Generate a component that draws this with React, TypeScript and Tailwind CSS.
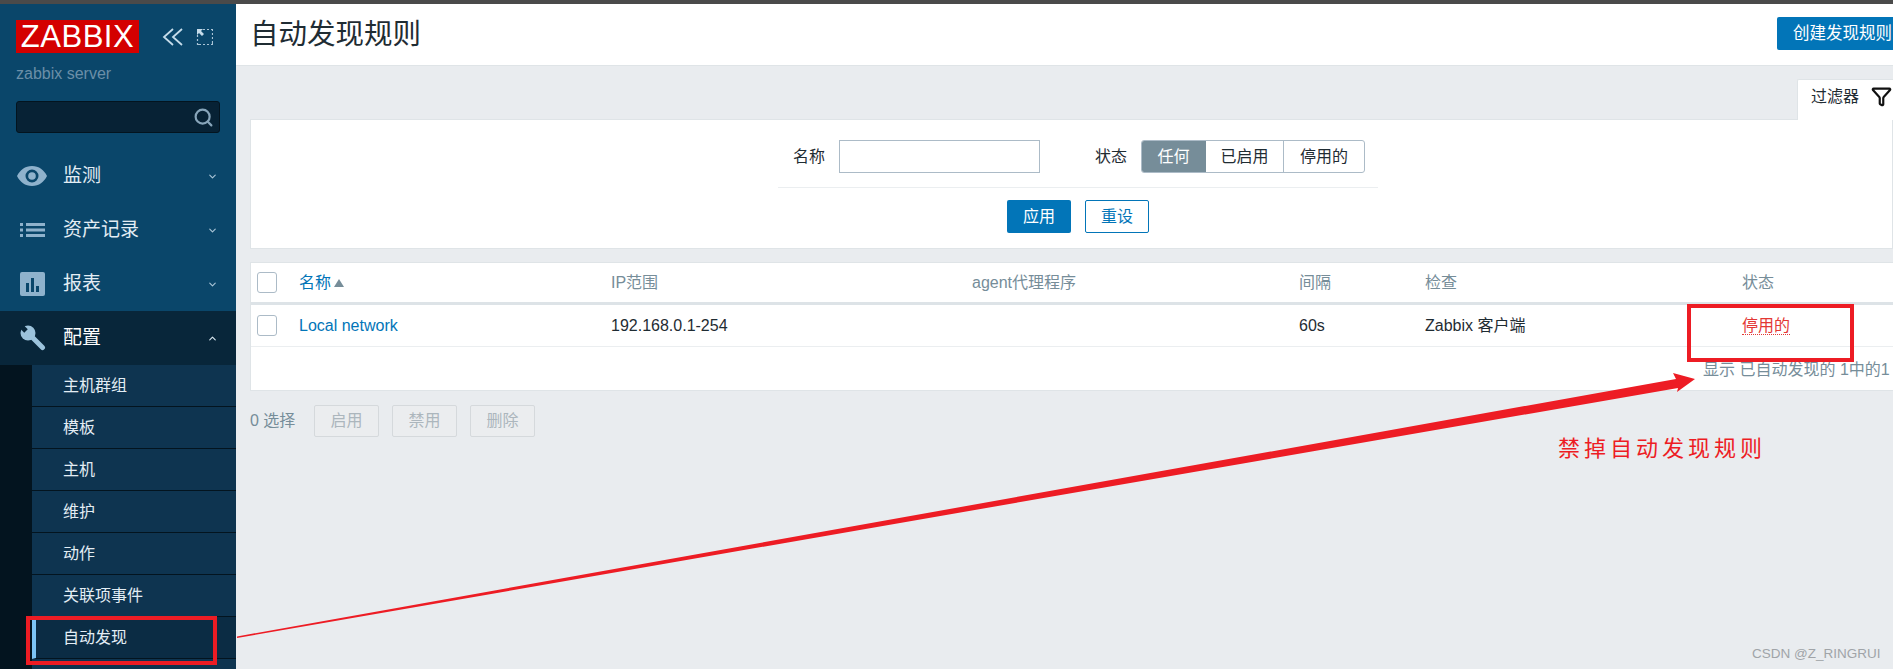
import { ChevronDown, ChevronUp, Search, Filter } from "lucide-react";

const subItems = ["主机群组", "模板", "主机", "维护", "动作", "关联项事件"];

function EyeIcon() {
  return (
    <svg width="30" height="20" viewBox="0 0 30 20" fill="#8fb2cc">
      <path d="M15 0C8 0 3 4 0 10c3 6 8 10 15 10s12-4 15-10C27 4 22 0 15 0zm0 16.500a6.500 6.500 0 1 1 0-13 6.500 6.500 0 0 1 0 13z" />
      <circle cx="15" cy="10" r="3.800" />
    </svg>
  );
}

function ListIcon() {
  return (
    <svg width="26" height="14" viewBox="0 0 26 14" fill="#8fb2cc" className="ml-[3px]">
      <rect x="0" y="0" width="3" height="3" />
      <rect x="0" y="5.500" width="3" height="3" />
      <rect x="0" y="11" width="3" height="3" />
      <rect x="6" y="0" width="19" height="3" />
      <rect x="6" y="5.500" width="19" height="3" />
      <rect x="6" y="11" width="19" height="3" />
    </svg>
  );
}

function ChartIcon() {
  return (
    <svg width="26" height="25" viewBox="0 0 26 25" className="ml-[3px]">
      <rect width="25" height="24" rx="2" fill="#8fb2cc" />
      <rect x="6" y="11" width="3" height="9" fill="#0a466a" />
      <rect x="11" y="6" width="3" height="14" fill="#0a466a" />
      <rect x="16" y="14" width="3" height="6" fill="#0a466a" />
    </svg>
  );
}

function WrenchIcon() {
  return (
    <svg width="26" height="26" viewBox="0 0 26 26" className="ml-[3px]">
      <circle cx="8" cy="8" r="7.500" fill="#9cc3dc" />
      <line x1="9" y1="9" x2="22.500" y2="22.500" stroke="#9cc3dc" strokeWidth="5" strokeLinecap="round" />
      <polygon points="7.770,4.230 4.230,7.770 -1.770,1.770 1.770,-1.770" fill="#08263a" />
    </svg>
  );
}

function CollapseIcon() {
  return (
    <svg width="21" height="18" viewBox="0 0 21 18" fill="none" stroke="#c5dcea" strokeWidth="1.800" className="ml-[23px]">
      <polyline points="11,1 2,9 11,17" />
      <polyline points="20,1 11,9 20,17" />
    </svg>
  );
}

function FullscreenIcon() {
  return (
    <svg width="17" height="17" viewBox="0 0 17 17" fill="none" stroke="#a9c4d6">
      <path d="M7 1.500h2M11 1.500h2M15 1.500h1.500V3M16.500 5v2M16.500 9v2M16.500 13v3.500H15M13 16.500h-2M9 16.500H7M5 16.500H1.500V15M1.500 13v-2M1.500 9V7" strokeWidth="1.200" />
      <path d="M1 1l6 0-2 2 3 3-2 2-3-3-2 2z" fill="#c5dcea" stroke="none" />
    </svg>
  );
}

function MenuRow({ icon, label, open }: { icon: React.ReactNode; label: string; open?: boolean }) {
  return (
    <div className={`flex items-center h-[54px] pl-[17px] pr-[18px] ${open ? "bg-[#08263a]" : ""}`}>
      <div className="w-[46px] flex items-center">{icon}</div>
      <span className={`flex-1 text-[19px] pt-[1px] ${open ? "text-white" : "text-[#e3edf4]"}`}>{label}</span>
      {open ? <ChevronUp size={11} strokeWidth={2.500} color="#d8e6ef" /> : <ChevronDown size={11} strokeWidth={2.500} color="#a9c4d6" />}
    </div>
  );
}

function Sidebar() {
  return (
    <aside className="w-[236px] shrink-0 bg-[#0a466a] flex flex-col overflow-hidden">
      <div className="flex items-center pt-[16px] pl-[16px]">
        <div className="w-[123px] h-[33px] bg-[#d40000] text-white text-[31px] leading-[33px] text-center tracking-[0.5px]">ZABBIX</div>
        <CollapseIcon />
        <div className="ml-[13px] flex"><FullscreenIcon /></div>
      </div>
      <div className="pl-[16px] mt-[11px] text-[16px] leading-[20px] text-[#6b8fa8]">zabbix server</div>
      <div className="mx-[16px] mt-[17px] h-[32px] w-[204px] shrink-0 rounded-[3px] bg-[#072235] border border-[#03141f] flex items-center justify-end pr-[5px]">
        <Search size={21} strokeWidth={2.500} color="#87a5ba" />
      </div>
      <div className="mt-[16px]">
        <MenuRow icon={<EyeIcon />} label="监测" />
        <MenuRow icon={<ListIcon />} label="资产记录" />
        <MenuRow icon={<ChartIcon />} label="报表" />
        <MenuRow icon={<WrenchIcon />} label="配置" open />
      </div>
      <div className="flex-1 pl-[32px] bg-[#03141f]">
        {subItems.map((s) => (
          <div key={s} className="h-[42px] bg-[#0e3450] border-b border-[#03141f] pl-[31px] flex items-center text-[16px] text-[#e3edf4]">{s}</div>
        ))}
        <div className="h-[42px] bg-[#0b2c44] border-b border-[#03141f] border-l-[4px] border-l-[#7cc4f5] pl-[27px] flex items-center text-[16px] text-[#e3edf4]">自动发现</div>
        <div className="h-[14px] bg-[#0e3450]" />
      </div>
    </aside>
  );
}

function Btn({ children }: { children: React.ReactNode }) {
  return (
    <div className="w-[65px] h-[32px] rounded-[2px] border border-[#d5d9dc] bg-[#ebedef] text-[#acb6bd] text-[16px] flex items-center justify-center">{children}</div>
  );
}

function Checkbox() {
  return <div className="w-[20px] h-[21px] rounded-[3px] border border-[#acbbc7] bg-white" />;
}

const columns = "grid grid-cols-[48px_312px_361px_327px_126px_317px_200px] items-center";

function RulesTable() {
  return (
    <div className="mt-[13px] ml-[14px] w-[1700px] h-[129px] bg-white border border-[#dfe4e7] text-[16px] overflow-hidden">
      <div className={`${columns} h-[42px] border-b-[3px] border-[#dde3e7] text-[#768d99]`}>
        <div className="pl-[6px]"><Checkbox /></div>
        <div className="text-[#0275b8] flex items-center gap-[3px]">名称<span className="w-0 h-0 border-x-[5px] border-x-transparent border-b-[8px] border-b-[#768d99]" /></div>
        <div>IP范围</div>
        <div>agent代理程序</div>
        <div>间隔</div>
        <div>检查</div>
        <div>状态</div>
      </div>
      <div className={`${columns} h-[42px] border-b border-[#ebeef0] text-[#1f2c33]`}>
        <div className="pl-[6px]"><Checkbox /></div>
        <div className="text-[#0275b8]">Local network</div>
        <div>192.168.0.1-254</div>
        <div />
        <div>60s</div>
        <div>Zabbix 客户端</div>
        <div className="text-[#e33734]"><span className="border-b border-dotted border-[#e33734]">停用的</span></div>
      </div>
      <div className="pl-[1452px] h-[42px] pt-[11px] text-[#768d99] whitespace-nowrap">显示 已自动发现的 1中的1</div>
    </div>
  );
}

function FilterPanel() {
  return (
    <div className="relative">
      <div className="flex justify-end h-[41px] pt-[13px] box-content -mb-[1px]">
        <div className="relative z-10 w-[96px] h-[41px] pb-[7px] bg-white border-l border-t border-[#dfe4e7] rounded-tl-[2px] pl-[13px] flex items-center gap-[12px] text-[16px] text-[#1f2c33] whitespace-nowrap overflow-hidden">
          过滤器
          <Filter size={21} strokeWidth={2.500} color="#111" className="shrink-0" />
        </div>
      </div>
      <div className="ml-[14px] w-[1643px] h-[130px] bg-white border border-[#dfe4e7] flex flex-col pt-[20px] text-[16px] text-[#1f2c33]">
        <div className="ml-[527px] w-[600px] border-b border-[#ebeef0] h-[48px] pl-[15px]">
          <div className="flex items-center h-[33px]">
            <span className="mr-[14px]">名称</span>
            <div className="w-[201px] h-[33px] border border-[#acbbc7]" />
            <span className="ml-[55px] mr-[14px]">状态</span>
            <div className="flex h-[33px] rounded-[3px] border border-[#acbbc7] overflow-hidden">
              <div className="w-[65px] -my-[1px] -ml-[1px] bg-[#768d99] text-white flex items-center justify-center">任何</div>
              <div className="w-[78px] border-r border-[#acbbc7] flex items-center justify-center">已启用</div>
              <div className="w-[80px] flex items-center justify-center">停用的</div>
            </div>
          </div>
        </div>
        <div className="ml-[756px] flex gap-[14px] mt-[12px]">
          <div className="w-[64px] h-[33px] rounded-[2px] bg-[#0275b8] text-white flex items-center justify-center">应用</div>
          <div className="w-[64px] h-[33px] rounded-[2px] border border-[#0275b8] text-[#0275b8] flex items-center justify-center">重设</div>
        </div>
      </div>
    </div>
  );
}

export default function App() {
  return (
    <div className="relative w-[1893px] h-[669px] overflow-hidden font-['Liberation_Sans','Noto_Sans_CJK_SC',sans-serif]">
      <div className="h-[4px] bg-[#4a4a4a]" />
      <div className="flex h-[665px]">
        <Sidebar />
        <main className="flex-1 min-w-0 bg-[#e9ecef] overflow-hidden">
          <header className="h-[62px] bg-white border-b border-[#dfe4e7] flex items-center justify-between pl-[14px]">
            <h1 className="text-[28.500px] text-[#1f2c33]">自动发现规则</h1>
            <div className="w-[116px] h-[33px] -mt-[3px] rounded-l-[2px] bg-[#0275b8] text-white text-[16.500px] flex items-center pl-[16px] whitespace-nowrap">创建发现规则</div>
          </header>
          <FilterPanel />
          <RulesTable />
          <div className="ml-[14px] mt-[14px] flex items-center text-[16px] text-[#768d99]">
            <span className="w-[64px]">0 选择</span>
            <div className="flex gap-[13px]">
              <Btn>启用</Btn>
              <Btn>禁用</Btn>
              <Btn>删除</Btn>
            </div>
          </div>
        </main>
      </div>

      {/* annotations drawn over the screenshot */}
      <svg className="absolute inset-0 pointer-events-none" width="1893" height="669" viewBox="0 0 1893 669">
        <polygon points="237,636.500 1676,379 1673,373 1695,379 1677,392 1678,388 237,638" fill="#ed1c24" />
      </svg>
      <div className="absolute left-[26px] top-[616px] w-[191px] h-[49px] border-[4px] border-[#ed1c24]" />
      <div className="absolute left-[1687px] top-[304px] w-[167px] h-[58px] border-[4px] border-[#ed1c24]" />
      <div className="absolute left-[1558px] top-[430px] text-[22px] tracking-[4px] text-[#ed1c24] font-['Noto_Sans_CJK_SC',serif]">禁掉自动发现规则</div>
      <div className="absolute left-[1752px] top-[644px] text-[13.500px] text-[#a0a4a8]">CSDN @Z_RINGRUI</div>
    </div>
  );
}
